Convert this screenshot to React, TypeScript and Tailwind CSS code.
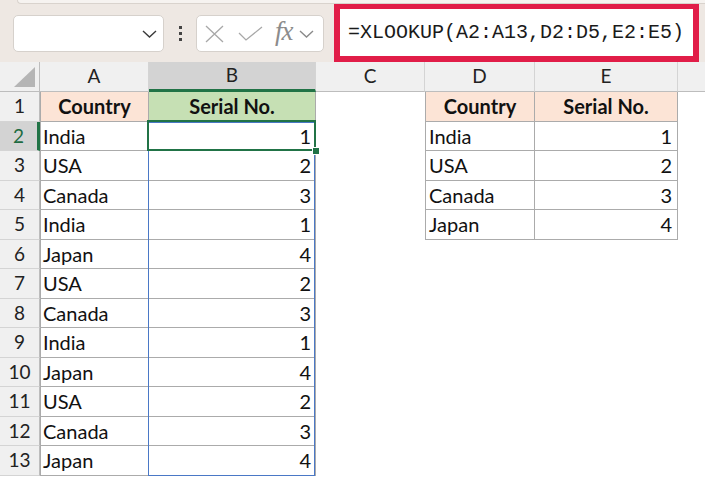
import React from "react";

const countries = ["India", "USA", "Canada", "India", "Japan", "USA", "Canada", "India", "Japan", "USA", "Canada", "Japan"];
const serials = [1, 2, 3, 1, 4, 2, 3, 1, 4, 2, 3, 4];
const lookup = [
  { c: "India", n: 1 },
  { c: "USA", n: 2 },
  { c: "Canada", n: 3 },
  { c: "Japan", n: 4 },
];

function Chevron({ className }: { className?: string }) {
  return (
    <svg className={className} width="15" height="8" viewBox="0 0 15 8" fill="none">
      <path d="M1 1 L7.5 7 L14 1" stroke="currentColor" strokeWidth="1.4" />
    </svg>
  );
}

function Toolbar() {
  return (
    <div className="relative h-[62px] bg-[#eee8e3] flex items-start">
      {/* ribbon edge above */}
      <div className="absolute top-0 left-[17px] right-0 h-[4px] bg-[#f6f3f0] border-b border-l border-[#d9d3cd] rounded-bl-[5px]" />

      {/* name box */}
      <div className="ml-[13px] mt-[15px] w-[151px] h-[37px] rounded-[5px] border border-[#d6d1cc] bg-white flex items-center justify-end pr-[6px]">
        <Chevron className="text-[#3a3a3a]" />
      </div>

      {/* dots */}
      <div className="ml-[15px] mt-[26px] flex flex-col gap-[3px]">
        <span className="w-[3px] h-[3px] bg-[#444]" />
        <span className="w-[3px] h-[3px] bg-[#444]" />
        <span className="w-[3px] h-[3px] bg-[#444]" />
      </div>

      {/* cancel / enter / fx */}
      <div className="ml-[14px] mt-[15px] w-[128px] h-[37px] rounded-[5px] border border-[#d6d1cc] bg-white flex items-center pl-[8px]">
        <svg width="19" height="18" viewBox="0 0 19 18" fill="none">
          <path d="M1 1 L18 17 M18 1 L1 17" stroke="#a8a8a8" strokeWidth="1.3" />
        </svg>
        <svg className="ml-[14px]" width="25" height="15" viewBox="0 0 25 15" fill="none">
          <path d="M1 7 L8 14 L24 1" stroke="#a8a8a8" strokeWidth="1.3" />
        </svg>
        <span className="ml-[12px] text-[#8c8c8c] italic text-[27px] leading-none font-['Liberation_Serif',serif] tracking-[-1px] -mt-[4px]">
          fx
        </span>
        <Chevron className="ml-[6px] text-[#8a8a8a]" />
      </div>

      {/* formula bar */}
      <div className="ml-[10px] mt-[3px] w-[365px] h-[59px] border-[6px] border-[#e11d48] bg-white flex items-center pl-[8px]">
        <span className="font-['Liberation_Mono',monospace] text-[20px] text-[#1a1a1a] leading-none">
          =XLOOKUP(A2:A13,D2:D5,E2:E5)
        </span>
      </div>
    </div>
  );
}

const headCell = "flex items-center justify-center border-r border-[#d4d4d4] text-[19px] text-[#222]";
const rowHead = "flex items-center justify-center bg-[#f0f0f0] border-b border-r border-[#d4d4d4] border-r-[#bdbdbd] text-[19px] text-[#222]";
const tbl = "flex items-center border-b border-r border-[#ababab] text-[20px] text-[#111]";

export default function App() {
  return (
    <div className="w-[705px] h-[477px] overflow-hidden bg-white font-['Lato','Noto_Sans',sans-serif]">
      <Toolbar />
      <div className="grid grid-cols-[40px_109px_167px_109px_110px_143px_1fr] grid-rows-[30px_repeat(13,29.5px)]">
        {/* column headers */}
        <div className="relative bg-[#f0f0f0] border-r border-b border-[#bdbdbd]">
          <svg className="absolute right-[4px] bottom-[4px]" width="21" height="20" viewBox="0 0 21 20">
            <path d="M21 0 L21 20 L0 20 Z" fill="#b5b5b5" />
          </svg>
        </div>
        <div className={`${headCell} bg-[#f0f0f0] border-b border-b-[#bdbdbd]`}>A</div>
        <div className={`${headCell} bg-[#d3d3d3] border-b-[3px] border-b-[#217346] text-[#1e6b41]`}>B</div>
        <div className={`${headCell} bg-[#f0f0f0] border-b border-b-[#bdbdbd]`}>C</div>
        <div className={`${headCell} bg-[#f0f0f0] border-b border-b-[#bdbdbd]`}>D</div>
        <div className={`${headCell} bg-[#f0f0f0] border-b border-b-[#bdbdbd]`}>E</div>
        <div className="bg-[#f0f0f0] border-b border-[#bdbdbd]" />

        {/* row 1 */}
        <div className={rowHead}>1</div>
        <div className={`${tbl} border-l justify-center font-bold bg-[#fce4d6]`}>Country</div>
        <div className={`${tbl} justify-center font-bold bg-[#c6e0b4]`}>Serial No.</div>
        <div />
        <div className={`${tbl} border-l justify-center font-bold bg-[#fce4d6]`}>Country</div>
        <div className={`${tbl} justify-center font-bold bg-[#fce4d6]`}>Serial No.</div>
        <div />

        {countries.map((c, i) => {
          const r = i + 2;
          const active = r === 2;
          const l = lookup[i];
          return (
            <React.Fragment key={r}>
              <div
                className={
                  active
                    ? "flex items-center justify-center bg-[#d3d3d3] border-b border-[#d4d4d4] border-r-[3px] border-r-[#217346] text-[19px] text-[#1e6b41]"
                    : rowHead
                }
              >
                {r}
              </div>
              <div className={`${tbl} border-l pl-[2px]`}>{c}</div>
              <div className={`${tbl} relative justify-end pr-[4px] ${active ? "z-10" : ""}`}>
                {serials[i]}
                {active && (
                  <>
                    <div className="absolute left-[-1px] top-0 w-[calc(100%+1px)] h-[354px] border border-[#4a78c6] pointer-events-none" />
                    <div className="absolute left-[-2px] top-[-2px] right-[-1px] bottom-[-1px] border-2 border-[#217346] pointer-events-none" />
                    <div className="absolute right-[-5px] bottom-[-5px] w-[8px] h-[8px] bg-[#217346] border border-white" />
                  </>
                )}
              </div>
              <div />
              {l ? (
                <>
                  <div className={`${tbl} border-l pl-[3px]`}>{l.c}</div>
                  <div className={`${tbl} justify-end pr-[5px]`}>{l.n}</div>
                </>
              ) : (
                <>
                  <div />
                  <div />
                </>
              )}
              <div />
            </React.Fragment>
          );
        })}
      </div>
    </div>
  );
}
